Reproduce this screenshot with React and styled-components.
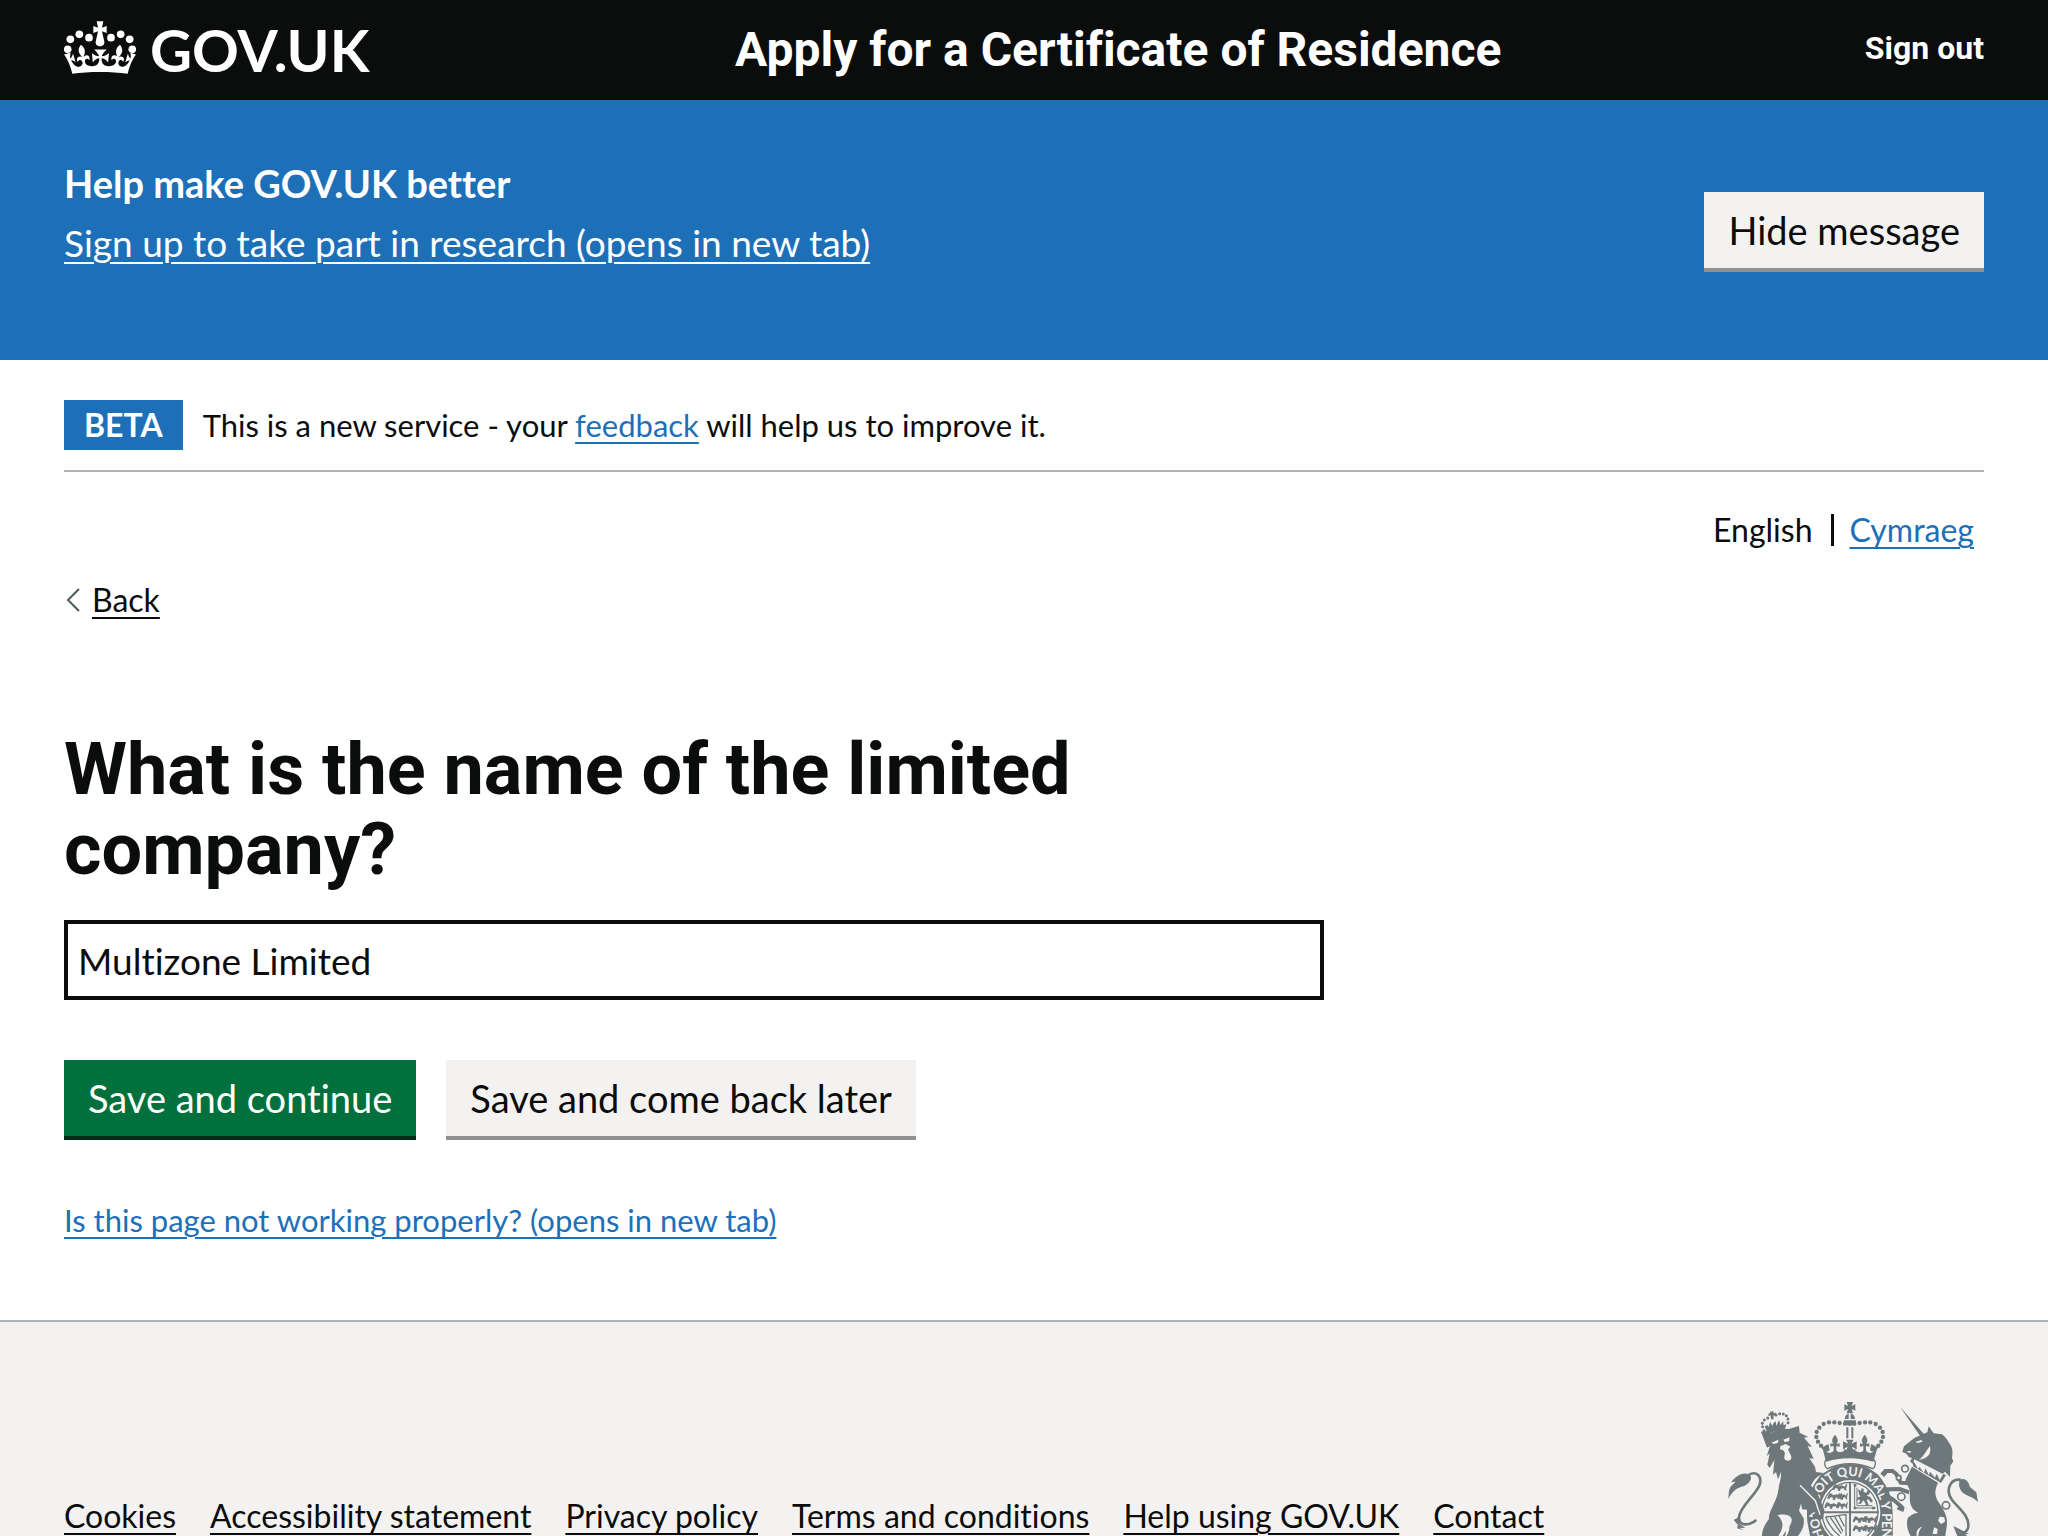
import React from "react"
import styled from "styled-components"
import {createGlobalStyle} from "styled-components"

const GlobalStyle = createGlobalStyle`
 *{
   margin:0;
   padding:0;
   box-sizing:border-box;
 }
 body{
   background-color:#ffffff;
   color:#0b0c0c;
   font-family:Lato, "Liberation Sans", sans-serif;
   font-variant-ligatures:none;
   font-size:32px;
   line-height:40px;
 }
`
const Width = styled.div`
 max-width:1920px;
 margin:0 64px;
 @media (min-width:2048px){
   margin:0 auto;
 }
`
const Header = styled.header`
 background-color:#0b0c0c;
 color:#ffffff;
`
const HeaderRow = styled(Width)`
 display:grid;
 grid-template-columns:671px 1fr auto;
 align-items:center;
 height:100px;
`
const Logo = styled.a`
 display:flex;
 align-items:center;
 gap:14px;
 color:#ffffff;
 font-size:58px;
 line-height:60px;
 font-weight:700;
 text-decoration:none;
 & svg{
   margin-bottom:6px;
 }
`
const HeaderLink = styled.a`
 color:#ffffff;
 font-family:Roboto, "Liberation Sans", sans-serif;
 font-size:${props => props.$service ? "48px" : "32px"};
 line-height:56px;
 font-weight:700;
 text-decoration:none;
`
const SignOut = styled(HeaderLink)`
 padding-bottom:4px;
`
const Banner = styled.section`
 background-color:#1d70b8;
 color:#ffffff;
`
const BannerRow = styled(Width)`
 display:flex;
 justify-content:space-between;
 align-items:flex-start;
 padding:58px 0 88px;
 height:260px;
`
const BannerTitle = styled.h2`
 font-size:38px;
 line-height:50px;
 font-weight:700;
 margin-bottom:10px;
`
const TextLink = styled.a`
 color:${props => props.$color || "#1d70b8"};
 font-size:${props => props.$large ? "37px" : "inherit"};
 line-height:${props => props.$large ? "50px" : "40px"};
 text-decoration:underline;
 text-decoration-thickness:2px;
 text-underline-offset:5px;
`
const Button = styled.button`
 background-color:${props => props.$primary ? "#00703c" : "#f3f2f1"};
 color:${props => props.$primary ? "#ffffff" : "#0b0c0c"};
 box-shadow:0 4px 0 ${props => props.$primary ? "#002d18" : "#929191"};
 border:none;
 height:76px;
 padding:0 24px;
 font-family:inherit;
 font-variant-ligatures:none;
 font-size:38px;
 line-height:38px;
 cursor:pointer;
`
const HideButton = styled(Button)`
 margin-top:34px;
`
const Phase = styled.div`
 display:flex;
 align-items:center;
 gap:20px;
 margin-top:40px;
 padding-bottom:20px;
 border-bottom:2px solid #b1b4b6;
 font-size:31px;
`
const Tag = styled.strong`
 background-color:#1d70b8;
 color:#ffffff;
 padding:5px 20px;
 font-size:32px;
 line-height:40px;
 font-weight:700;
`
const Languages = styled.nav`
 margin-top:38px;
 padding-right:10px;
`
const LanguageList = styled.ul`
 display:flex;
 justify-content:flex-end;
 align-items:center;
 list-style:none;
`
const Language = styled.li`
 & + &{
   margin-left:18px;
   display:flex;
   align-items:center;
   gap:16px;
 }
 & + &::before{
   content:"";
   width:3px;
   height:32px;
   background-color:#0b0c0c;
 }
`
const Back = styled.div`
 display:flex;
 align-items:center;
 gap:10px;
 margin-top:30px;
`
const Form = styled.form`
 width:calc((100% + 60px) * 2 / 3 - 60px);
 margin-top:110px;
`
const Title = styled.h1`
 font-family:Roboto, "Liberation Sans", sans-serif;
 font-size:72px;
 line-height:80px;
 font-weight:700;
`
const Field = styled.input`
 display:block;
 width:100%;
 height:80px;
 margin-top:30px;
 padding:0 10px;
 border:4px solid #0b0c0c;
 color:#0b0c0c;
 font-family:inherit;
 font-variant-ligatures:none;
 font-size:37px;
 line-height:50px;
`
const Buttons = styled.div`
 display:flex;
 gap:30px;
 margin:60px 0 64px;
`
const Problem = styled.div`
 font-size:31px;
`
const Footer = styled.footer`
 margin-top:80px;
 padding-top:80px;
 background-color:#f3f2f1;
 border-top:2px solid #b1b4b6;
`
const FooterRow = styled(Width)`
 display:flex;
 justify-content:space-between;
 align-items:flex-end;
`
const FooterLinks = styled.ul`
 display:flex;
 gap:34px;
 list-style:none;
`
const Crest = styled.svg`
 display:block;
 width:250px;
 height:134px;
 margin-right:6px;
`

const footerLinks = ["Cookies", "Accessibility statement", "Privacy policy", "Terms and conditions", "Help using GOV.UK", "Contact"]

function Crown(){
  const pearls = [[33, 50], [62, 40], [89, 55], [97, 85]]
  return(
    <svg width="72" height="53" viewBox="0 0 216 159" fill="#ffffff" aria-hidden="true">
      {pearls.map(([x, y]) => (
        <g key={x}>
          <circle cx={108 - x} cy={y} r="11.5"/>
          <circle cx={108 + x} cy={y} r="11.5"/>
        </g>
      ))}
      <path d="M98 1h20l-4 19 14-5v21l-14-5 7 31c2 18-28 18-26 0l7-31-14 5V15l14 5z"/>
      <g transform="translate(0 -38) scale(6.75 6.55)">
        <path d="M16 29.2c4.400 0 8.600.3 12.300.8 1.100-4.500 2.400-7 3.700-8.800l-2.500-.9c.2 1.300.3 1.900 0 2.700-.4-.4-.8-1.100-1.100-2.300l-1.200 4c.7-.5 1.300-.8 2-.9-1.100 2.500-2.600 3.100-3.500 3-1.100-.2-1.700-1.200-1.500-2.100.3-1.200 1.500-1.500 2.100-.1 1.100-2.300-.8-3-2-2.300 1.900-1.900 2.100-3.500.6-5.600-2.100 1.600-2.100 3.200-1.200 5.500-1.200-1.400-3.200-.6-2.500 1.600.9-1.400 2.100-.5 1.900.8-.2 1.100-1.700 2.100-3.500 1.900-2.700-.2-2.900-2.100-2.900-3.600.7-.1 1.900.5 2.900 1.900l.4-4.300c-1.100 1.100-2.100 1.400-3.200 1.400.4-1.200 2.100-3 2.100-3h-5.400s1.700 1.900 2.100 3c-1.100 0-2.100-.2-3.200-1.400l.4 4.300c1-1.400 2.200-2 2.900-1.900-.1 1.500-.2 3.400-2.900 3.600-1.900.2-3.400-.8-3.500-1.900-.2-1.300 1-2.200 1.900-.8.7-2.300-1.200-3-2.500-1.600.9-2.200.9-3.900-1.200-5.500-1.500 2-1.300 3.700.6 5.600-1.200-.7-3.100 0-2 2.300.6-1.400 1.800-1.100 2.100.1.2.9-.3 1.900-1.500 2.100-.9.2-2.400-.5-3.500-3 .6 0 1.200.3 2 .9l-1.200-4c-.3 1.100-.7 1.900-1.100 2.300-.3-.8-.2-1.400 0-2.700l-2.900.9C1.300 23 2.600 25.500 3.700 30c3.700-.5 7.900-.8 12.300-.8"/>
      </g>
    </svg>
  )
}

function RoyalArms(){
  const gray = "#6e7779"
  const light = "#f3f2f1"
  const arch = [[14, 131], [30, 129], [46, 127], [62, 127], [78, 132], [91, 143], [99, 156], [100, 171], [95, 185], [86, 197]]
  const lionPearls = [[117, 92], [113, 80], [112, 70], [118, 60], [128, 54], [153, 45], [164, 41], [175, 42], [184, 47], [189, 57], [189, 68]]
  const passant = "M2 12l5-8 7 1 3 5 12-3 8 4 5-9 3 3-4 12 3 5-7 0-3-6-9 1-2 7-7-1 1-6-8-2-3 6-6-1z"
  return(
    <Crest viewBox="84 66 750 402" fill={gray} role="img" aria-label="Royal coat of arms">
      {/* garter and shield */}
      <path d="M322 425c-4-50 4-92 29-124l12-18 38-18h98l34 18c34 40 50 98 45 185H330z"/>
      <ellipse cx="450" cy="397" rx="128" ry="147"/>
      <path id="motto" d="M372 471C356 435 353 400 357 368C362 324 396 288 450 288S541 330 546 397V520" fill="none"/>
      <text fill={light} fontSize="38" fontWeight="700" fontFamily="Lato, sans-serif">
        <textPath href="#motto">HONI SOIT QUI MAL Y PENSE</textPath>
      </text>
      <ellipse cx="450" cy="397" rx="91" ry="97" fill={light}/>
      <ellipse cx="450" cy="397" rx="84" ry="90" fill="none" stroke={gray} strokeWidth="4"/>
      <path d="M447 306h6v162h-6zM364 394h172v6H364z"/>
      <path d="M464 315v69h58M471 323v54h46" fill="none" stroke={gray} strokeWidth="3"/>
      <path d="M461 312h8v8h-8zM461 380h8v8h-8zM516 380h10v8h-10z"/>
      <path d="M474 327l9 6 2-9 6 3 0 9 9 2 4-11 8 7-5 9-7 4 11 4 8 12-6 5-8-10-5 2 6 14-8 5-2-9-6-9-7 10-9 1 7-9-4-5-9 5 5-11 8-2-4-9z"/>
      <g>
        <path transform="translate(397 309)" d={passant}/>
        <path transform="translate(382 336)" d={passant}/>
        <path transform="translate(373 363)" d={passant}/>
        <path transform="translate(412 336) scale(.7 1)" d={passant}/>
        <path transform="translate(412 363) scale(.7 1)" d={passant}/>
        <path transform="translate(458 405)" d={passant}/>
        <path transform="translate(487 405)" d={passant}/>
        <path transform="translate(458 432)" d={passant}/>
        <path transform="translate(487 432)" d={passant}/>
      </g>
      <path d="M377 410c22 2 42-6 61-6v64M377 410c7 20 17 38 42 58M391 412l33 49M404 410l25 44M417 408l16 31" fill="none" stroke={gray} strokeWidth="4"/>
      {/* lion */}
      <g transform="translate(75 60)">
        {lionPearls.map(([x, y]) => <circle key={x + "-" + y} cx={x} cy={y} r="4.500"/>)}
        <path d="M134 36l11-3 0 7 7-2 1 9-8-1 1 12-8 0-1-12-6 3-1-9 6 1z"/>
        <path d="M119 80l8-6 3 8 6-16 6 12 4-10 6-4 2 13 8-16 5 14 7-12 2 13 8-4-5 20c-20-2-32 2-49 10z"/>
        <path d="M130 106c18-9 34-13 53-12l1 4c-20 0-36 4-51 12z"/>
        <path d="M108 95l24-3 3 8c18-9 34-13 56-13l31-9 2 20 26 13-13 2 24 28-13-3 18 38-13-1 17 25 3 16 23 3c-19 9-30 20-38 38l20 24 20 48-3 24-10 8-6-10-12 10-5-16 11-7-12-2-12 6-2-13-16-1-3-18-6 22 14 23c4 28-10 45-27 65l-30 0c14-30 24-40-1-76-4 30 14 40-2 76l-66 0c0-30 8-45 22-64-2-24 24-50 28-86 2-20 10-36 8-54l-9 22-6-22-9 8 4-44-14 24-7-10 7-34-9 9 10-31-9 5z"/>
        <path d="M139 128l21-9-1 9-12 4zM175 119l19-7-2 12-13 2zM166 139l16-7 14 8-7 8 8 17c7 12-4 20-14 16-9-5-4-14-3-22l-6-9-9-2z" fill={light}/>
        <path d="M157 345c20-3 38-2 43 12 2 17-15 30-27 51h-13c16-25 18-43-3-63z" fill={light}/>
        <path d="M225 256l46 46 14 42" fill="none" stroke={light} strokeWidth="4"/>
        <path d="M72 224c22-12 40 5 32 30-10 30-60 66-62 98-1 28 30 26 52 8" fill="none" stroke={gray} strokeWidth="8"/>
        <path d="M10 297c2-17 0-27 8-38l14-14-14 2c13-17 34-33 54-24 14 9 2 28-14 35-24 5-36 16-48 39z"/>
        <path d="M26 360l14-8 4 20 17 12-18-1 14 8-21-6 3-10z"/>
      </g>
      {/* strap over the garter, below the crown */}
      <path d="M377 240c40-14 108-14 146 0 6 8 3 22-5 26-44-19-92-19-136 0-9-6-10-18-5-26z" fill={light} stroke={gray} strokeWidth="4"/>
      {/* crown */}
      {arch.map(([x, y]) => (
        <g key={x}>
          <circle cx={449 - x} cy={y} r="6.500"/>
          <circle cx={449 + x} cy={y} r="6.500"/>
        </g>
      ))}
      <path d="M440 66h19l-4 12 11-5v19l-11-5 4 13h-19l4-13-11 5V73l11 5z"/>
      <path d="M434 117c0-8 5-15 12-16v16zM452 101c8 1 13 8 13 16h-13zM431 121h37c0 22-37 22-37 0z"/>
      <path d="M439 142h6v33h-6zM454 142h6v33h-6z"/>
      <path d="M438 179h23l-7 12 16-7v24l-14-8 7 18h-27l7-18-14 8v-24l16 7z"/>
      <path d="M405 164c10 12 10 19 5 28l9-2v10l-10-2v15h-8v-15l-10 2v-10l9 2c-5-9-5-16 5-28zM494 164c-10 12-10 19-5 28l-9-2v10l10-2v15h8v-15l10 2v-10l-9 2c5-9 5-16-5-28z"/>
      <path d="M358 193l12 7 15-8 4 17c-2 5-8 7-12 5 10 8 20 6 27-6 8 10 20 12 30 2l-6-8c13 14 30 14 43 0l-6 8c10 10 22 8 30-2 7 12 17 14 27 6-4 2-10 0-12-5l4-17 15 8 11-7-10 18-10 34c-46-14-100-14-142 0l-9-34z"/>
      {/* unicorn */}
      <g transform="translate(450 60)">
        <path d="M150 20l72 83-10 7z"/>
        <path d="M211 106l21-9 4-18 15 21 25 3c13 9 19 24 27 34 7 14 4 27 3 37l4 10-9 13-1 34-15-16-20 18-76-40-9-9 6-10-9-2-8-11-12-5 5-17 31-25z"/>
        <path d="M196 126l18-6 4 5-15 4zM240 138c4 22-2 36-33 42 16-13 20-26 33-42zM172 153l12 1-3 4-9-1z" fill={light}/>
        <path d="M193 178l93 48-11 23-89-51z" fill={light}/>
        <path d="M189 182v17l84 50 15-24-8-3-11 18-9-19-5 12-15-18-3 11-11-21-4 14-14-19-4 8-8-16z"/>
        <path d="M186 200l78 48c-15 32-6 46 4 62 20 28 26 50 22 70l-4 28H205c1-16 7-22 13-29-12 6-20 10-18 29h-18c-12-20-14-44-7-56 10-10 20-12 30-14-24-12-28-30-25-66l-14-32z"/>
        <path d="M176 250l-24-2-13-26-12-9-21 0-8 9" fill="none" stroke={gray} strokeWidth="12"/>
        <path d="M178 277l-29-10-34 1-7 17 24 16 24 21" fill="none" stroke={gray} strokeWidth="12"/>
        <path d="M105 211l-14 10 12 10 9-12zM150 310l14 12-4 14-20-8z"/>
        <g fill={light} stroke={gray} strokeWidth="5">
          <circle cx="165" cy="206" r="10"/>
          <circle cx="146" cy="233" r="7"/>
          <circle cx="154" cy="290" r="11"/>
          <circle cx="288" cy="316" r="11"/>
        </g>
        <path d="M269 350l14 2 2 13-12 7-9-10zM252 382l11 5-2 15-13 0z" fill={light}/>
        <path d="M332 239c-34-4-46 34-26 61 19 24 56 49 48 84-4 15-18 18-35 8" fill="none" stroke={gray} strokeWidth="8"/>
        <path d="M329 240c14-10 29 5 30 20l20 17 5 30c-12-16-34-18-48-31-10-12-10-25-7-36zM310 378l17 8 30 16-12 1 7 5h-30z"/>
      </g>
    </Crest>
  )
}

export default class App extends React.Component{
  render(){
    return(
      <>
        <GlobalStyle/>
        <Header>
          <HeaderRow>
            <Logo href="#">
              <Crown/>
              GOV.UK
            </Logo>
            <HeaderLink $service href="#">Apply for a Certificate of Residence</HeaderLink>
            <SignOut href="#">Sign out</SignOut>
          </HeaderRow>
        </Header>
        <Banner>
          <BannerRow>
            <div>
              <BannerTitle>Help make GOV.UK better</BannerTitle>
              <TextLink $large $color="#ffffff" href="#">Sign up to take part in research (opens in new tab)</TextLink>
            </div>
            <HideButton type="button">Hide message</HideButton>
          </BannerRow>
        </Banner>
        <Width>
          <Phase>
            <Tag>BETA</Tag>
            <span>This is a new service - your <TextLink href="#">feedback</TextLink> will help us to improve it.</span>
          </Phase>
          <Languages>
            <LanguageList>
              <Language>English</Language>
              <Language><TextLink href="#">Cymraeg</TextLink></Language>
            </LanguageList>
          </Languages>
          <Back>
            <svg width="18" height="24" viewBox="0 0 18 24" fill="none" stroke="#505a5f" strokeWidth="2" aria-hidden="true">
              <path d="M15 1L4 12l11 11"/>
            </svg>
            <TextLink $color="#0b0c0c" href="#">Back</TextLink>
          </Back>
          <main>
            <Form onSubmit={e => e.preventDefault()}>
              <Title><label htmlFor="company">What is the name of the limited company?</label></Title>
              <Field id="company" type="text" defaultValue="Multizone Limited"/>
              <Buttons>
                <Button $primary type="submit">Save and continue</Button>
                <Button type="button">Save and come back later</Button>
              </Buttons>
            </Form>
            <Problem>
              <TextLink href="#">Is this page not working properly? (opens in new tab)</TextLink>
            </Problem>
          </main>
        </Width>
        <Footer>
          <FooterRow>
            <FooterLinks>
              {footerLinks.map(name => (
                <li key={name}><TextLink $color="#0b0c0c" href="#">{name}</TextLink></li>
              ))}
            </FooterLinks>
            <RoyalArms/>
          </FooterRow>
        </Footer>
      </>
    )
  }
}
